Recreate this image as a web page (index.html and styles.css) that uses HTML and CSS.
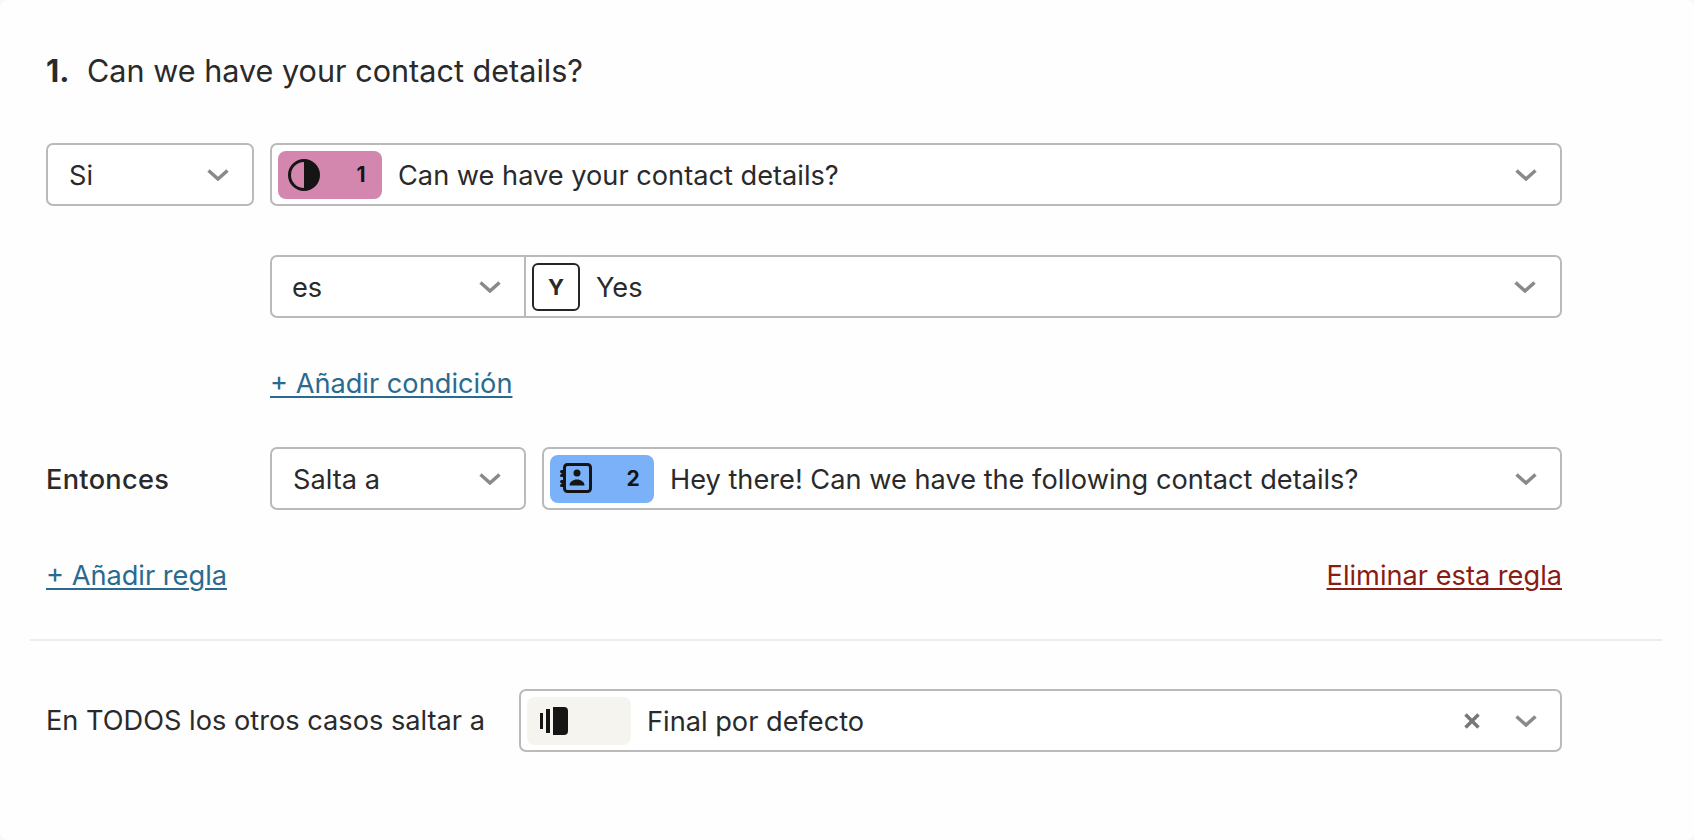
FILE: index.html
```html
<!DOCTYPE html>
<html lang="en">
<head>
  <meta charset="UTF-8">
  <title>Logic rules</title>
  <link rel="stylesheet" href="styles.css">
</head>
<body>
  <div class="panel">
    <section class="rule">
      <h2 class="question"><b>1.</b> Can we have your contact details?</h2>

      <div class="row">
        <div class="select select-plain"><span class="value">Si</span><svg class="chevron" viewBox="0 0 22 12"><path d="M1.500 1.500l9.500 8.500 9.500-8.500"/></svg></div>
        <div class="select select-grow">
          <span class="badge badge-pink">
            <svg class="badge-icon" viewBox="0 0 32 32"><circle cx="16" cy="16" r="14.500" fill="none" stroke="#151515" stroke-width="3"/><path d="M16 1.500a14.500 14.500 0 0 1 0 29z" fill="#151515"/></svg>
            <span class="num">1</span>
          </span>
          <span class="value">Can we have your contact details?</span>
          <svg class="chevron" viewBox="0 0 22 12"><path d="M1.500 1.500l9.500 8.500 9.500-8.500"/></svg>
        </div>
      </div>

      <div class="row row-cond">
        <div class="select select-split">
          <div class="split-left"><span class="value">es</span><svg class="chevron" viewBox="0 0 22 12"><path d="M1.500 1.500l9.500 8.500 9.500-8.500"/></svg></div>
          <div class="split-right">
            <span class="key">Y</span>
            <span class="value">Yes</span>
            <svg class="chevron" viewBox="0 0 22 12"><path d="M1.500 1.500l9.500 8.500 9.500-8.500"/></svg>
          </div>
        </div>
      </div>

      <div class="row row-add"><a class="link" href="#">+ Añadir condición</a></div>

      <div class="row row-then">
        <strong class="then-label">Entonces</strong>
        <div class="then-fields">
          <div class="select select-plain select-action"><span class="value">Salta a</span><svg class="chevron" viewBox="0 0 22 12"><path d="M1.500 1.500l9.500 8.500 9.500-8.500"/></svg></div>
          <div class="select select-grow">
            <span class="badge badge-blue">
              <svg class="badge-icon" viewBox="0 0 32 32"><rect x="4.500" y="1.500" width="26" height="27" rx="3" fill="none" stroke="#151515" stroke-width="3"/><path d="M3 7H1.500a1.500 1.500 0 0 0 0 3v1a1.500 1.500 0 0 0 0 3H3zM3 17H1.500a1.500 1.500 0 0 0 0 3v1a1.500 1.500 0 0 0 0 3H3z" fill="#151515"/><circle cx="17" cy="10" r="3.500" fill="#151515"/><path d="M9.500 22.500c0-3.500 3.500-6 7.500-6s7.500 2.500 7.500 6z" fill="#151515"/></svg>
              <span class="num">2</span>
            </span>
            <span class="value">Hey there! Can we have the following contact details?</span>
            <svg class="chevron" viewBox="0 0 22 12"><path d="M1.500 1.500l9.500 8.500 9.500-8.500"/></svg>
          </div>
        </div>
      </div>

      <div class="rule-footer">
        <a class="link" href="#">+ Añadir regla</a>
        <a class="link link-danger" href="#">Eliminar esta regla</a>
      </div>
    </section>

    <section class="default-row">
      <span class="default-label">En TODOS los otros casos saltar a</span>
      <div class="select select-grow">
        <span class="badge badge-end">
          <svg class="badge-icon" viewBox="0 0 28 28"><path d="M0 6h3v16H0zM6 2h4v24H6zM13 0h11a4 4 0 0 1 4 4v20a4 4 0 0 1-4 4H13z" fill="#151515"/></svg>
        </span>
        <span class="value">Final por defecto</span>
        <svg class="clear" viewBox="0 0 18 18"><path d="M2.500 2.500l13 13M15.500 2.500l-13 13"/></svg>
        <svg class="chevron" viewBox="0 0 22 12"><path d="M1.500 1.500l9.500 8.500 9.500-8.500"/></svg>
      </div>
    </section>
  </div>
</body>
</html>
```

FILE: styles.css
```css
* {
  box-sizing: border-box;
}

html, body {
  margin: 0;
  padding: 0;
  height: 840px;
  overflow: hidden;
}

html {
  background: #f8f8f8;
}

body {
  font-family: "Inter", "Liberation Sans", sans-serif;
  font-size: 27.200px;
  color: #2a2a2b;
  background: #fefefe;
  border-radius: 8px;
}

.panel {
  width: 1632px;
  margin-left: 30px;
  padding-top: 53px;
}

.rule {
  padding: 0 100px 0 16px;
  border-bottom: 2px solid #ededed;
  height: 588px;
}

.question {
  margin: 0 0 54px;
  font-size: 30.600px;
  font-weight: 400;
  line-height: 36px;
}

.question b {
  font-weight: 700;
  margin-right: 9px;
}

.row {
  display: grid;
  grid-template-columns: 208px 1fr;
  column-gap: 16px;
  margin-bottom: 49px;
}

.row-cond {
  margin-bottom: 0;
}

.row-add {
  height: 36px;
  margin: 47px 0 46px;
  align-items: center;
}

.row-add .link {
  grid-column: 2;
  justify-self: start;
}

.row-then {
  align-items: center;
  margin-bottom: 48px;
}

.row-cond .select-split {
  grid-column: 2;
}

.then-label {
  font-weight: 500;
  letter-spacing: 0.300px;
  padding-top: 1px;
}

.then-fields {
  display: flex;
  gap: 16px;
}

.select {
  display: flex;
  align-items: center;
  height: 63px;
  padding: 0 23px 0 6px;
  border: 2px solid #bababa;
  border-radius: 7px;
  background: #fff;
}

.select-plain {
  padding-left: 21px;
}

.select-action {
  width: 256px;
  flex: none;
}

.select-grow {
  flex: 1;
}

.select-grow .value {
  margin-left: 16px;
}

.value {
  flex: 1;
  padding-top: 1px;
  white-space: nowrap;
}

.chevron {
  width: 22px;
  height: 12px;
  flex: none;
  fill: none;
  stroke: #8a8a8a;
  stroke-width: 3.500;
}

.clear {
  width: 18px;
  height: 18px;
  margin-right: 34px;
  fill: none;
  stroke: #777;
  stroke-width: 3.500;
}

.badge {
  display: flex;
  align-items: center;
  justify-content: space-between;
  width: 104px;
  height: 48px;
  padding: 0 10px;
  border-radius: 8px;
  flex: none;
}

.badge-pink { background: #d386ae; }
.badge-blue { background: #7ab1f8; }
.badge-end  { background: #f5f4ef; }

.badge-icon {
  width: 32px;
  height: 32px;
}

.badge-end .badge-icon {
  width: 28px;
  height: 28px;
  margin-left: 3px;
}

.num {
  font-size: 21px;
  font-weight: 700;
  color: #151515;
  width: 22px;
  text-align: center;
}

.select-split {
  padding: 0;
}

.split-left {
  display: flex;
  align-items: center;
  width: 254px;
  height: 100%;
  padding: 0 23px 0 20px;
  border-right: 2px solid #bababa;
}

.split-right {
  flex: 1;
  display: flex;
  align-items: center;
  padding: 0 24px 0 6px;
}

.key {
  display: flex;
  align-items: center;
  justify-content: center;
  width: 48px;
  height: 48px;
  margin-right: 16px;
  border: 2px solid #262627;
  border-radius: 6px;
  font-size: 22px;
  font-weight: 700;
}

.link {
  color: #2a6a8f;
  text-decoration: underline;
  text-decoration-thickness: 2px;
  text-underline-offset: 3px;
}

.link-danger {
  color: #8a1c14;
}

.rule-footer {
  display: flex;
  justify-content: space-between;
  line-height: 36px;
}

.default-row {
  display: flex;
  align-items: center;
  gap: 34px;
  padding: 48px 100px 0 16px;
}
```
